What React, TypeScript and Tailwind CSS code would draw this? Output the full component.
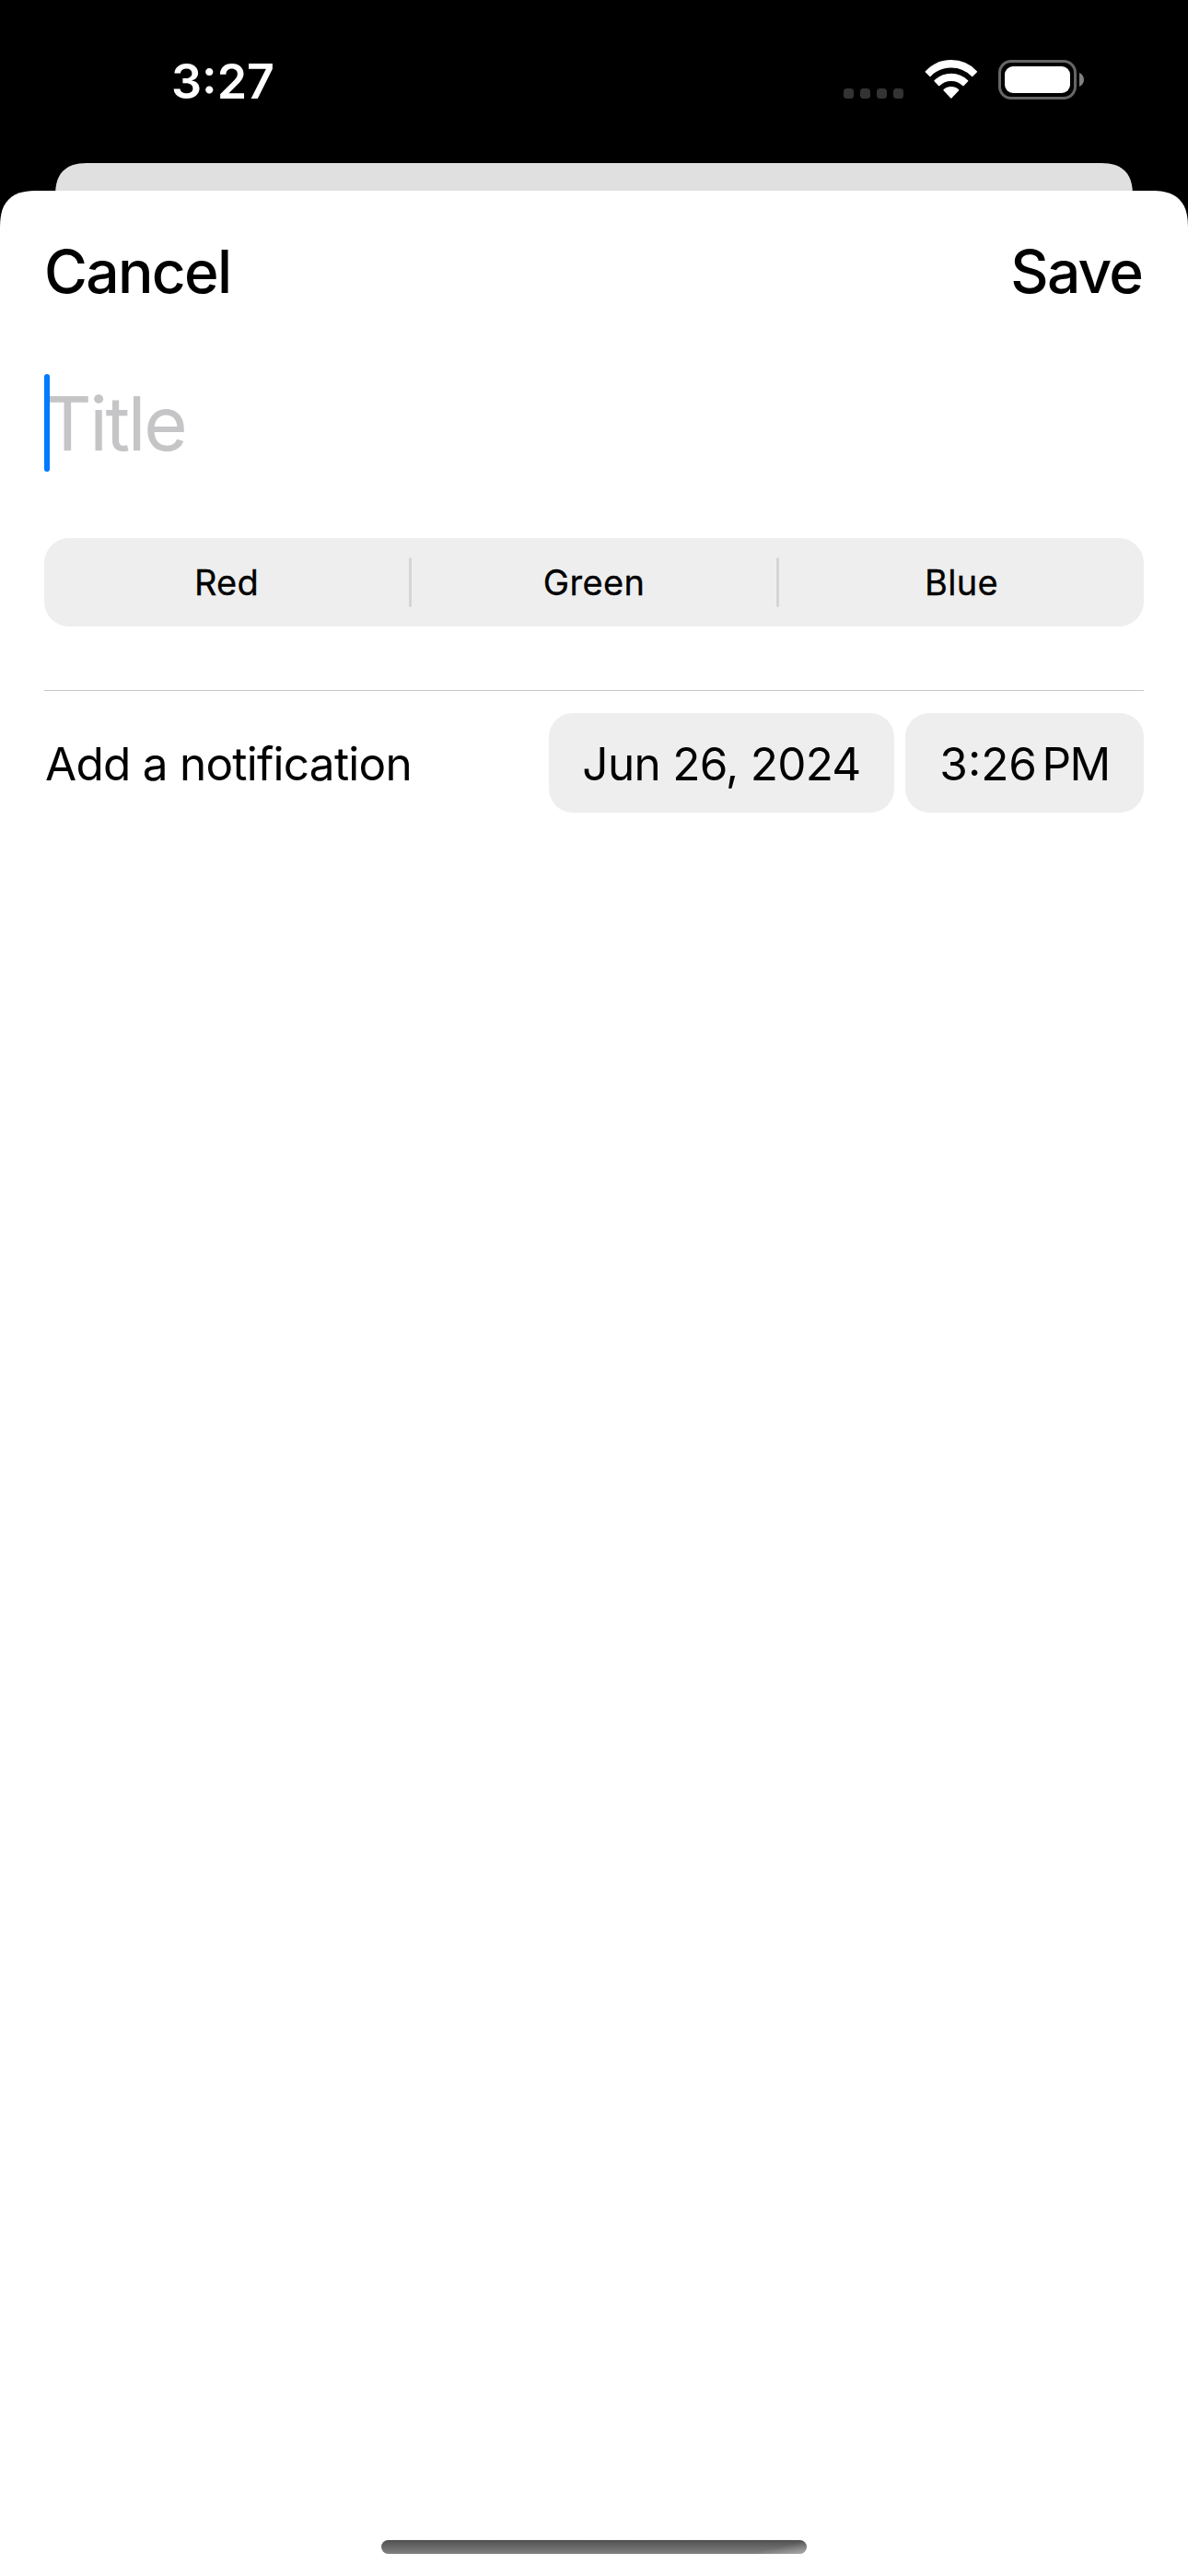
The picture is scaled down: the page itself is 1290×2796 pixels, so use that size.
const SEGMENTS = ["Red", "Green", "Blue"];

function SignalDots() {
  return (
    <div className="flex h-[43px] items-end gap-[7px] pb-px">
      {[0, 1, 2, 3].map((dot) => (
        <span key={dot} className="size-[11px] rounded-[3.5px] bg-[#333333]" />
      ))}
    </div>
  );
}

function WifiIcon() {
  return (
    <svg className="h-[43px] w-[58px]" viewBox="341 75 174 129" fill="#fff" stroke="#fff" strokeWidth="4" strokeLinejoin="round">
      <path d="M344.5 113.5A113 113 0 0 1 510.5 113.5L496 127.5A95 95 0 0 0 359 127.5Z" />
      <path d="M374 143.5A75 75 0 0 1 481 143.5L467 158A56 56 0 0 0 388 158Z" />
      <path d="M404 173.5A34 34 0 0 1 451 173.5L427.5 198.5Z" />
    </svg>
  );
}

function BatteryIcon() {
  return (
    <div className="flex items-center gap-[3px]">
      <div className="flex h-[43px] w-[85px] items-center justify-center rounded-[14px] border-[3px] border-[#666666]">
        <div className="h-[29px] w-[71px] rounded-[9px] bg-white" />
      </div>
      <svg className="h-[15px] w-[5px]" viewBox="0 0 5 15" fill="#808080">
        <path d="M0 0C3 1.3 5 4.2 5 7.5S3 13.7 0 15Z" />
      </svg>
    </div>
  );
}

function StatusBar() {
  return (
    <div className="flex h-[177px] items-center justify-between pr-[113px] pb-px pl-[186px]">
      <span className="pt-[2px] text-[52px] leading-[64px] font-semibold text-white">3:27</span>
      <div className="flex items-center pb-[3px]">
        <SignalDots />
        <div className="ml-[23px]">
          <WifiIcon />
        </div>
        <div className="ml-[22px]">
          <BatteryIcon />
        </div>
      </div>
    </div>
  );
}

function SegmentedControl() {
  return (
    <div className="mt-[72px] flex h-[96px] items-center rounded-[27px] bg-[#eeeeee]">
      {SEGMENTS.map((label, index) => (
        <div key={label} className="contents">
          {index > 0 && <span className="h-[54px] w-[3px] rounded-full bg-[#d5d5d6]" />}
          <button className="h-full flex-1 text-[38px] leading-[48px] tracking-[0.3px] [-webkit-text-stroke:0.3px_black]">
            {label}
          </button>
        </div>
      ))}
    </div>
  );
}

export default function App() {
  return (
    <div className="flex h-[2796px] w-[1290px] flex-col bg-black font-['Inter',sans-serif] text-black">
      <StatusBar />
      <div className="mx-[60px] -mb-[30px] h-[60px] shrink-0 rounded-t-[28px] bg-[#e0e0e0] supports-[corner-shape:squircle]:rounded-t-[38px] supports-[corner-shape:squircle]:[corner-top-left-shape:superellipse(1.45)] supports-[corner-shape:squircle]:[corner-top-right-shape:superellipse(1.45)]" />
      <main className="relative flex flex-1 flex-col rounded-t-[32px] bg-white px-[48px] pt-[48px] supports-[corner-shape:squircle]:rounded-t-[42px] supports-[corner-shape:squircle]:[corner-top-left-shape:superellipse(1.45)] supports-[corner-shape:squircle]:[corner-top-right-shape:superellipse(1.45)]">
        <header className="flex justify-between text-[64px] leading-[80px] font-medium">
          <button className="tracking-[-1.66px]">Cancel</button>
          <button className="mr-[2px] tracking-[-1.8px]">Save</button>
        </header>

        <div className="relative mt-[71px] flex h-[106px] items-center">
          <span className="-ml-px pt-[2px] text-[81.5px] leading-[106px] tracking-[-2.4px] text-[#c5c5c7]">Title</span>
          <span className="absolute inset-y-0 left-0 w-[6px] rounded-full bg-[#007aff]" />
        </div>

        <SegmentedControl />

        <div className="mt-[69px] h-px bg-[#c6c6c8]" />

        <div className="mt-[24px] flex h-[108px] items-center text-[49.5px] leading-[64px]">
          <span className="mr-auto ml-px pt-[2px] tracking-[-0.75px]">Add a notification</span>
          <button className="h-full w-[375px] rounded-[26px] bg-[#eeeeef] pt-[2px] whitespace-nowrap tracking-[-0.72px]">
            Jun 26, 2024
          </button>
          <button className="ml-[12px] flex h-full w-[259px] items-center justify-center gap-[5.5px] rounded-[26px] bg-[#eeeeef] pt-[2px]">
            <span>3:26</span>
            <span className="tracking-[-1.6px]">PM</span>
          </button>
        </div>

        <div className="mx-auto mt-auto mb-[24px] h-[15px] w-[462px] rounded-full bg-linear-to-b from-[#505050] to-[#828282]">
          <div className="ml-auto h-full w-[60px] rounded-r-full bg-linear-to-br from-transparent from-50% to-white/35" />
        </div>
      </main>
    </div>
  );
}
